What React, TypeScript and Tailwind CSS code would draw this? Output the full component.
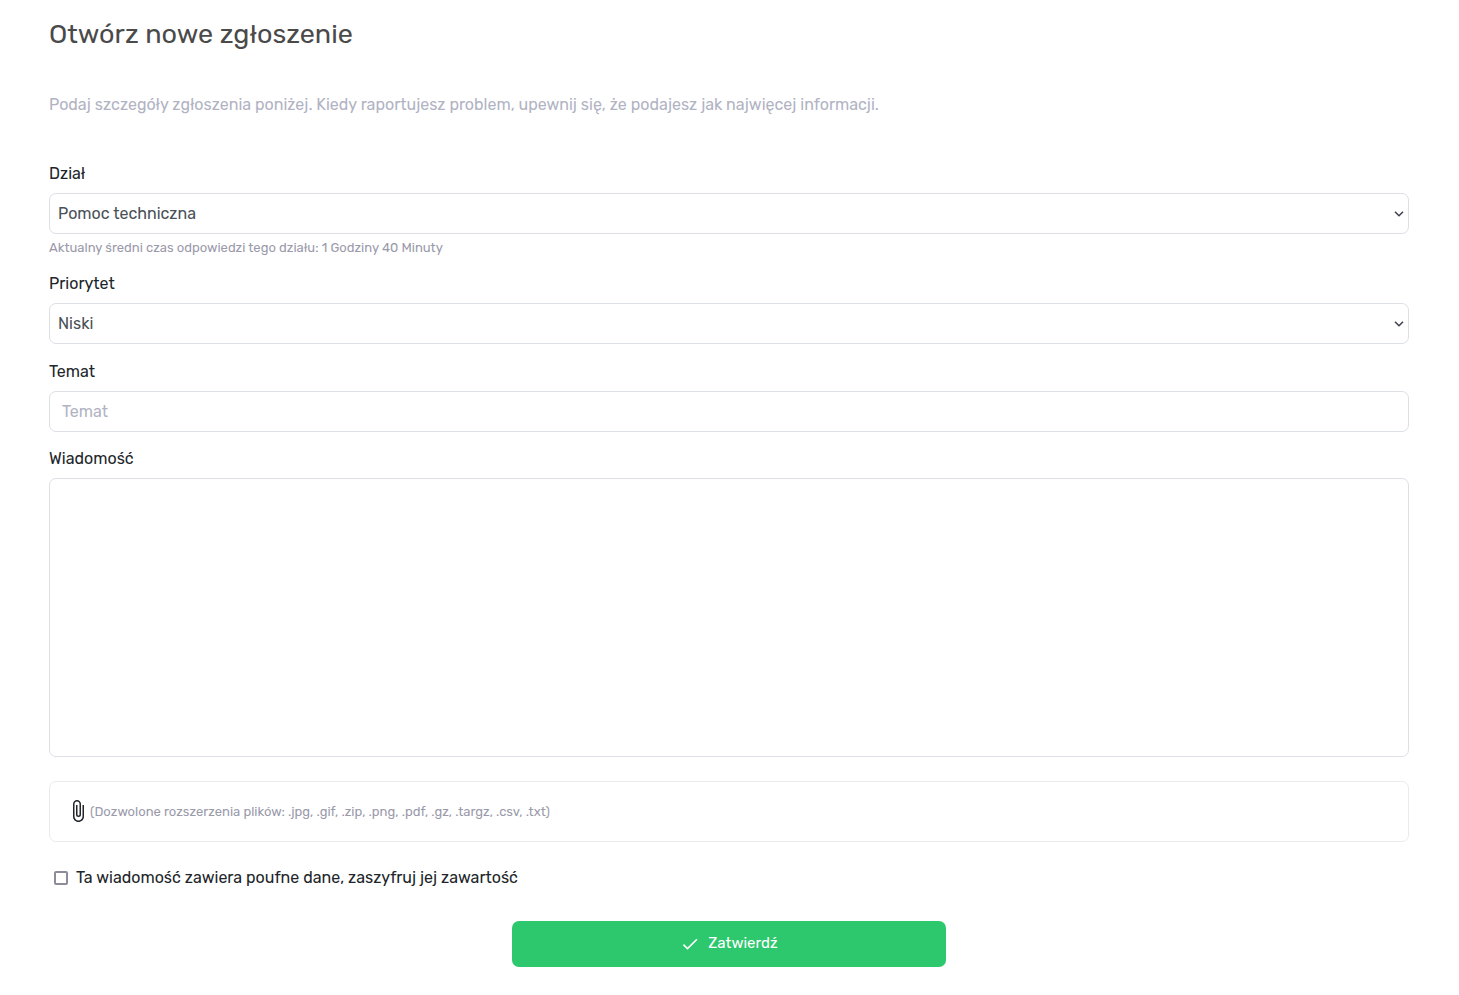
import { MdAttachFile, MdCheck } from "react-icons/md";
import type { ReactNode } from "react";

const fieldBox =
  "block w-full rounded-[7px] border border-[#dcdfe4] bg-white text-base text-[#495057] outline-none focus:border-[#2dc76d]";

function Label({ htmlFor, children }: { htmlFor: string; children: ReactNode }) {
  return (
    <label htmlFor={htmlFor} className="mb-[7px] block text-base leading-6 text-[#212529]">
      {children}
    </label>
  );
}

function SelectField({ id, options }: { id: string; options: string[] }) {
  return (
    <div className="relative">
      <select id={id} className={`${fieldBox} h-[41px] appearance-none pr-8 pl-2`}>
        {options.map((o) => (
          <option key={o}>{o}</option>
        ))}
      </select>
      <svg
        viewBox="0 0 10 6"
        aria-hidden="true"
        className="pointer-events-none absolute top-[18px] right-[5px] h-[6px] w-[10px] fill-none stroke-[#43434f] stroke-[1.6]"
      >
        <path d="M1 0.7 L5 4.7 L9 0.7" />
      </svg>
    </div>
  );
}

export default function App() {
  return (
    <main className="bg-white pt-[13px] pr-[50px] pb-7 pl-[49px] font-['Rubik','Roboto',sans-serif]">
      <h1 className="text-[27px] leading-[42px] text-[#4a4a4a]">Otwórz nowe zgłoszenie</h1>
      <p className="mt-[38px] text-base leading-6 text-[#b1b3c3]">
        Podaj szczegóły zgłoszenia poniżej. Kiedy raportujesz problem, upewnij się, że podajesz jak najwięcej informacji.
      </p>

      <form className="mt-[45px]" onSubmit={(e) => e.preventDefault()}>
        <div>
          <Label htmlFor="department">Dział</Label>
          <SelectField id="department" options={["Pomoc techniczna"]} />
          <p className="mt-1 text-[13px] leading-5 text-[#9a9aaa]">
            Aktualny średni czas odpowiedzi tego działu: 1 Godziny 40 Minuty
          </p>
        </div>

        <div className="mt-[14px]">
          <Label htmlFor="priority">Priorytet</Label>
          <SelectField id="priority" options={["Niski", "Średni", "Wysoki"]} />
        </div>

        <div className="mt-4">
          <Label htmlFor="subject">Temat</Label>
          <input
            id="subject"
            type="text"
            placeholder="Temat"
            className={`${fieldBox} h-[41px] px-3 placeholder:text-[#b1b3c3]`}
          />
        </div>

        <div className="mt-[15px]">
          <Label htmlFor="message">Wiadomość</Label>
          <textarea id="message" className={`${fieldBox} h-[279px] resize-none p-3`} />
        </div>

        <div className="mt-6 flex h-[61px] items-center rounded-[7px] border border-[#ebebed] px-4">
          <button type="button" aria-label="Dodaj załącznik" className="shrink-0 pb-[2px] text-[#212529]">
            <MdAttachFile className="size-6" />
          </button>
          <span className="text-[13px] leading-5 text-[#9a9aaa]">
            (Dozwolone rozszerzenia plików: .jpg, .gif, .zip, .png, .pdf, .gz, .targz, .csv, .txt)
          </span>
        </div>

        <label className="mt-6 flex w-fit items-center gap-2 pl-[5px] text-base leading-6 text-[#212529]">
          <input
            type="checkbox"
            className="size-[14px] appearance-none rounded-[2px] border-2 border-[#8c8c9b] bg-white checked:bg-[#2dc76d]"
          />
          Ta wiadomość zawiera poufne dane, zaszyfruj jej zawartość
        </label>

        <div className="mx-auto mt-[31px] w-1/3 px-[10px]">
          <button
            type="submit"
            className="flex h-[46px] w-full items-center justify-center gap-2 rounded-[7px] bg-[#2dc76d] pb-px text-[15px] text-white"
          >
            <MdCheck className="size-5" />
            Zatwierdź
          </button>
        </div>
      </form>
    </main>
  );
}
